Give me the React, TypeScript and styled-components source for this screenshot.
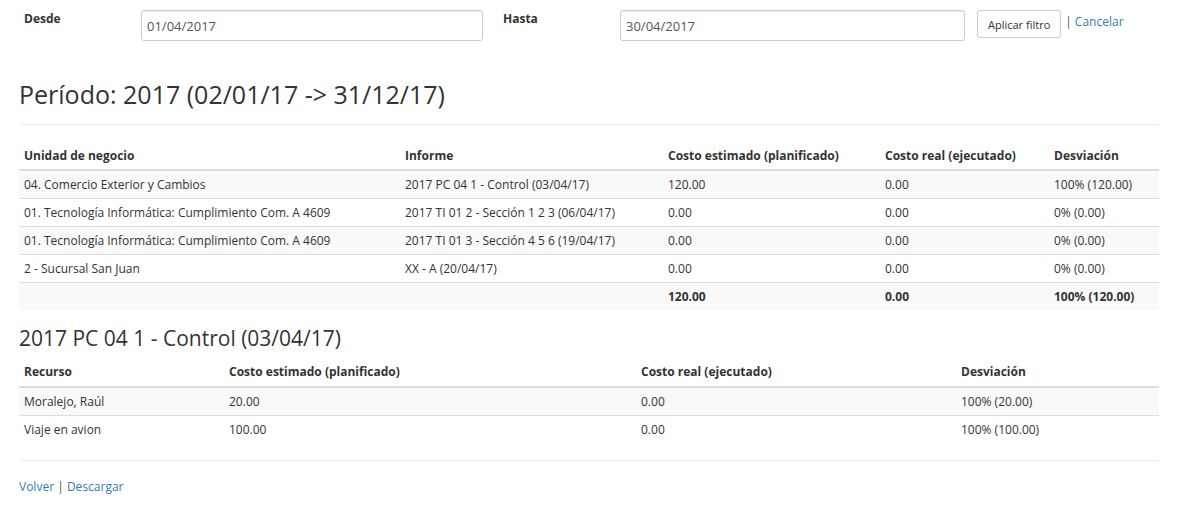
import React from "react";
import styled, { createGlobalStyle } from "styled-components";

const Global = createGlobalStyle`
  html, body { margin: 0; padding: 0; background: #fff; }
  body {
    font-family: "Open Sans", "Liberation Sans", sans-serif;
    font-size: 12px;
    line-height: 1.42857;
    color: #333;
  }
  * { box-sizing: border-box; }
`;

const Page = styled.div`
  width: 1140px;
  margin-left: 19px;
  padding-top: 10px;
`;

const FilterRow = styled.form`
  display: flex;
  align-items: flex-start;
  height: 31px;
`;

const Label = styled.label`
  font-weight: 700;
  width: 122px;
  padding-left: 5px;
  font-size: 12px;
`;

const DateInput = styled.input<{ $w: number }>`
  width: ${(p) => p.$w}px;
  height: 31px;
  border: 1px solid #ccc;
  border-radius: 3px;
  padding: 0 5px;
  font-family: "Open Sans", "Liberation Sans", sans-serif;
  font-size: 13px;
  color: #555;
  box-shadow: inset 0 1px 1px rgba(0, 0, 0, 0.075);
  margin-right: 15px;
  &:last-of-type {
    margin-right: 12px;
  }
`;

const Button = styled.button`
  height: 28px;
  padding: 0 10px;
  border: 1px solid #ccc;
  border-radius: 3px;
  background: #fff;
  font-family: "Open Sans", "Liberation Sans", sans-serif;
  font-size: 11px;
  color: #333;
  margin-right: 4px;
`;

const Sep = styled.span`
  color: #555;
  padding-top: 3px;
  font-size: 12px;
`;

const Link = styled.a`
  color: #337ab7;
  text-decoration: none;
  font-size: 12px;
`;

const CancelLink = styled(Link)`
  padding-top: 3px;
  margin-left: 3px;
`;

const Title = styled.h3`
  font-family: "Open Sans", "Liberation Sans", sans-serif;
  font-weight: 400;
  font-size: 25px;
  line-height: 1.1;
  margin: 40px 0 0;
  color: #333;
`;

const SubTitle = styled.h4`
  font-family: "Open Sans", "Liberation Sans", sans-serif;
  font-weight: 400;
  font-size: 21px;
  line-height: 1.1;
  margin: 17px 0 8px;
  color: #333;
`;

const Rule = styled.hr<{ $top: number; $bottom: number }>`
  border: 0;
  border-top: 1px solid #eee;
  margin: ${(p) => p.$top}px 0 ${(p) => p.$bottom}px;
`;

const Table = styled.table`
  width: 100%;
  border-collapse: collapse;
  table-layout: fixed;
  border-spacing: 0;
`;

const Th = styled.th`
  text-align: left;
  font-weight: 700;
  padding: 5px;
  border-bottom: 2px solid #ddd;
  vertical-align: bottom;
`;

const Tr = styled.tr`
  &:nth-child(odd) {
    background: #f9f9f9;
  }
`;

const Td = styled.td<{ $bold?: boolean }>`
  padding: 5px;
  border-top: 1px solid #ddd;
  font-weight: ${(p) => (p.$bold ? 700 : 400)};
  white-space: nowrap;
`;

const Footer = styled.div`
  padding-top: 17px;
`;

const mainRows = [
  ["04. Comercio Exterior y Cambios", "2017 PC 04 1 - Control (03/04/17)", "120.00", "0.00", "100% (120.00)"],
  ["01. Tecnología Informática: Cumplimiento Com. A 4609", "2017 TI 01 2 - Sección 1 2 3 (06/04/17)", "0.00", "0.00", "0% (0.00)"],
  ["01. Tecnología Informática: Cumplimiento Com. A 4609", "2017 TI 01 3 - Sección 4 5 6 (19/04/17)", "0.00", "0.00", "0% (0.00)"],
  ["2 - Sucursal San Juan", "XX - A (20/04/17)", "0.00", "0.00", "0% (0.00)"],
];

const detailRows = [
  ["Moralejo, Raúl", "20.00", "0.00", "100% (20.00)"],
  ["Viaje en avion", "100.00", "0.00", "100% (100.00)"],
];

export default function App() {
  return (
    <>
      <Global />
      <Page>
        <FilterRow onSubmit={(e) => e.preventDefault()}>
          <Label>Desde</Label>
          <DateInput $w={342} defaultValue="01/04/2017" />
          <Label>Hasta</Label>
          <DateInput $w={345} defaultValue="30/04/2017" />
          <Button type="submit">Aplicar filtro</Button>
          <Sep>|</Sep>
          <CancelLink href="#">Cancelar</CancelLink>
        </FilterRow>

        <Title>Período: 2017 (02/01/17 -&gt; 31/12/17)</Title>
        <Rule $top={15} $bottom={17} />

        <Table>
          <colgroup>
            <col style={{ width: 381 }} />
            <col style={{ width: 263 }} />
            <col style={{ width: 217 }} />
            <col style={{ width: 169 }} />
            <col style={{ width: 110 }} />
          </colgroup>
          <thead>
            <tr>
              <Th>Unidad de negocio</Th>
              <Th>Informe</Th>
              <Th>Costo estimado (planificado)</Th>
              <Th>Costo real (ejecutado)</Th>
              <Th>Desviación</Th>
            </tr>
          </thead>
          <tbody>
            {mainRows.map((r, i) => (
              <Tr key={i}>
                {r.map((c, j) => (
                  <Td key={j}>{c}</Td>
                ))}
              </Tr>
            ))}
            <Tr>
              <Td />
              <Td />
              <Td $bold>120.00</Td>
              <Td $bold>0.00</Td>
              <Td $bold>100% (120.00)</Td>
            </Tr>
          </tbody>
        </Table>

        <SubTitle>2017 PC 04 1 - Control (03/04/17)</SubTitle>
        <Table>
          <colgroup>
            <col style={{ width: 205 }} />
            <col style={{ width: 412 }} />
            <col style={{ width: 320 }} />
            <col style={{ width: 203 }} />
          </colgroup>
          <thead>
            <tr>
              <Th>Recurso</Th>
              <Th>Costo estimado (planificado)</Th>
              <Th>Costo real (ejecutado)</Th>
              <Th>Desviación</Th>
            </tr>
          </thead>
          <tbody>
            {detailRows.map((r, i) => (
              <Tr key={i}>
                {r.map((c, j) => (
                  <Td key={j}>{c}</Td>
                ))}
              </Tr>
            ))}
          </tbody>
        </Table>

        <Rule $top={17} $bottom={0} />
        <Footer>
          <Link href="#">Volver</Link> <Sep>|</Sep> <Link href="#">Descargar</Link>
        </Footer>
      </Page>
    </>
  );
}
